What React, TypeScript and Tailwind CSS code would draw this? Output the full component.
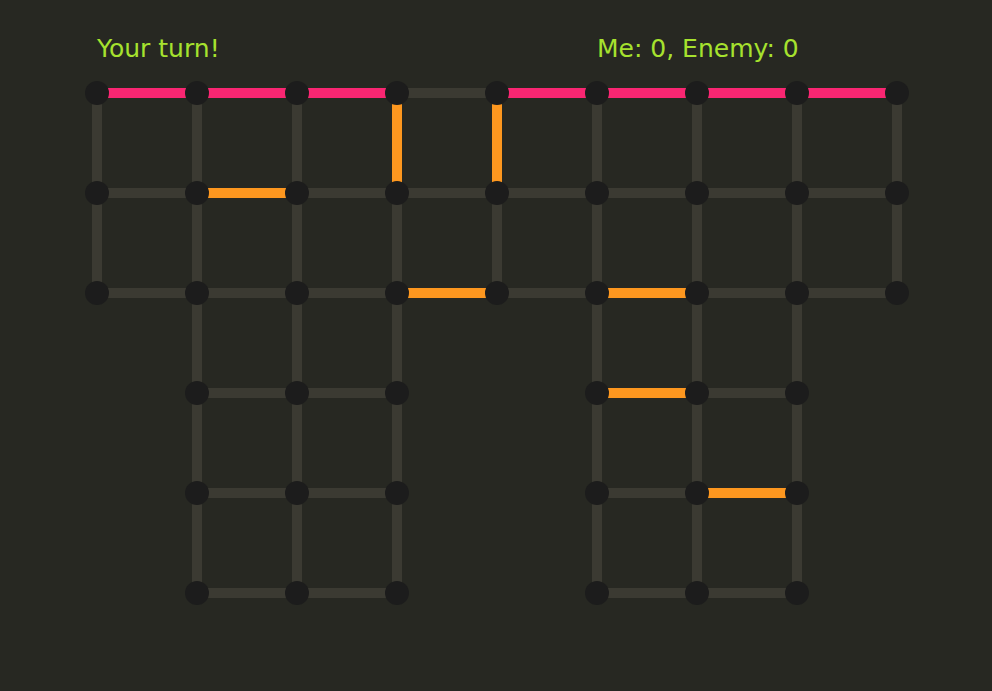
import React from "react";

type Edge = [number, number, number, number, string?];

const COLS = 9;
const STEP = 100;
const X0 = 97;
const Y0 = 32; // board svg starts at y=61

const points: [number, number][] = [];
for (let r = 0; r < 3; r++) for (let c = 0; c < COLS; c++) points.push([c, r]);
for (let r = 3; r < 6; r++) for (const c of [1, 2, 3, 5, 6, 7]) points.push([c, r]);

const has = (c: number, r: number) => points.some(([pc, pr]) => pc === c && pr === r);

const colored: Record<string, string> = {
  "h0-0": "pink", "h1-0": "pink", "h2-0": "pink", "h4-0": "pink", "h5-0": "pink", "h6-0": "pink", "h7-0": "pink",
  "h1-1": "orange",
  "h3-2": "orange", "h5-2": "orange",
  "h5-3": "orange",
  "h6-4": "orange",
  "v3-0": "orange", "v4-0": "orange",
};

const edges: Edge[] = [];
for (const [c, r] of points) {
  if (has(c + 1, r)) edges.push([c, r, c + 1, r, colored[`h${c}-${r}`]]);
  if (has(c, r + 1)) edges.push([c, r, c, r + 1, colored[`v${c}-${r}`]]);
}

const stroke = (k?: string) => (k === "pink" ? "#f92672" : k === "orange" ? "#fd971f" : "#3b3a32");

export default function App() {
  const gray = edges.filter((e) => !e[4]);
  const marked = edges.filter((e) => e[4]);
  return (
    <div className="w-[992px] h-[691px] bg-[#272822] overflow-hidden font-['DejaVu_Sans',sans-serif]">
      <div className="flex pt-[37px] pl-[97px] text-[25px] leading-[24px] text-[#a6e22e]">
        <span className="w-[500px]">Your turn!</span>
        <span>Me: 0, Enemy: 0</span>
      </div>
      <svg width="992" height="630" className="block">
        {[...gray, ...marked].map(([c1, r1, c2, r2, k], i) => (
          <line
            key={i}
            x1={X0 + c1 * STEP}
            y1={Y0 + r1 * STEP}
            x2={X0 + c2 * STEP}
            y2={Y0 + r2 * STEP}
            stroke={stroke(k)}
            strokeWidth={10}
          />
        ))}
        {points.map(([c, r]) => (
          <circle key={`${c}-${r}`} cx={X0 + c * STEP} cy={Y0 + r * STEP} r={12} fill="#1c1c1c" />
        ))}
      </svg>
    </div>
  );
}
